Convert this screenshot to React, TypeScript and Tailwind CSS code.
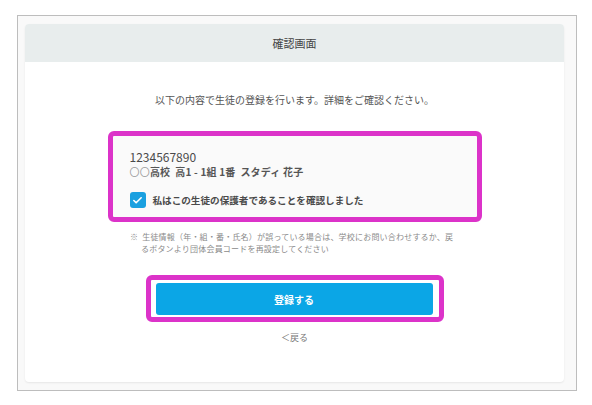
import { Check } from "lucide-react";

const FONT = { fontFamily: '"Noto Sans CJK JP", "Noto Sans", sans-serif' };

function InfoBox() {
  return (
    <div className="mx-auto mt-[24px] w-[374px] rounded-[6px] border-[5px] border-[#dc33c9] bg-[#fafafa] pb-[9px] pl-[17px] pt-[12px]">
      <p className="text-[12px] leading-[17px] text-[#4a4a4a]">1234567890</p>
      <p className="text-[10px] font-bold leading-[14px] tracking-[0.2px] text-[#555]">
        <span className="font-normal text-[#9a9a9a]">〇〇</span>高校&nbsp; 高1 - 1組 1番&nbsp; スタディ 花子
      </p>
      <label className="mt-[13px] flex items-center gap-[7px]">
        <span className="flex h-[16px] w-[16px] items-center justify-center rounded-[3px] bg-[#1aa0e0]">
          <Check className="h-[11px] w-[11px] text-white" strokeWidth={3.5} />
        </span>
        <span className="text-[9.6px] font-bold leading-[14px] text-[#4a4a4a]">
          私はこの生徒の保護者であることを確認しました
        </span>
      </label>
    </div>
  );
}

export default function App() {
  return (
    <div className="min-h-[405px] bg-white pl-[17px] pt-[15px]" style={FONT}>
      <div className="h-[376px] w-[560px] border border-[#bdbdbd] bg-[#f9f9f9] pl-[7px] pt-[8px]">
        <div className="h-[358px] w-[539px] rounded-[4px] bg-white shadow-[0_1px_2px_rgba(0,0,0,0.08)]">
          <div className="flex h-[38px] items-center justify-center rounded-t-[4px] bg-[#e8eded]">
            <h1 className="text-[11px] leading-none text-[#444]">確認画面</h1>
          </div>

          <p className="mt-[31px] text-center text-[10px] leading-[14px] text-[#555]">
            以下の内容で生徒の登録を行います。詳細をご確認ください。
          </p>

          <InfoBox />

          <p className="ml-[105px] mt-[9px] w-[340px] pl-[11px] -indent-[11px] text-[8px] leading-[12px] tracking-[0.2px] text-[#8a8a8a]">
            ※&nbsp; 生徒情報（年・組・番・氏名）が誤っている場合は、学校にお問い合わせするか、戻
            <br />
            るボタンより団体会員コードを再設定してください
          </p>

          <div className="mx-auto mt-[20px] w-[298px] rounded-[6px] border-[5px] border-[#dc33c9] bg-white pb-[2px] pl-[5px] pr-[6px] pt-[3px]">
            <button
              type="button"
              className="flex h-[32px] w-full items-center justify-center rounded-[3px] bg-[#0ba6e6] text-[10px] font-bold text-white"
            >
              登録する
            </button>
          </div>

          <p className="mt-[9px] text-center text-[9px] leading-[13px] text-[#777]">＜戻る</p>
        </div>
      </div>
    </div>
  );
}
